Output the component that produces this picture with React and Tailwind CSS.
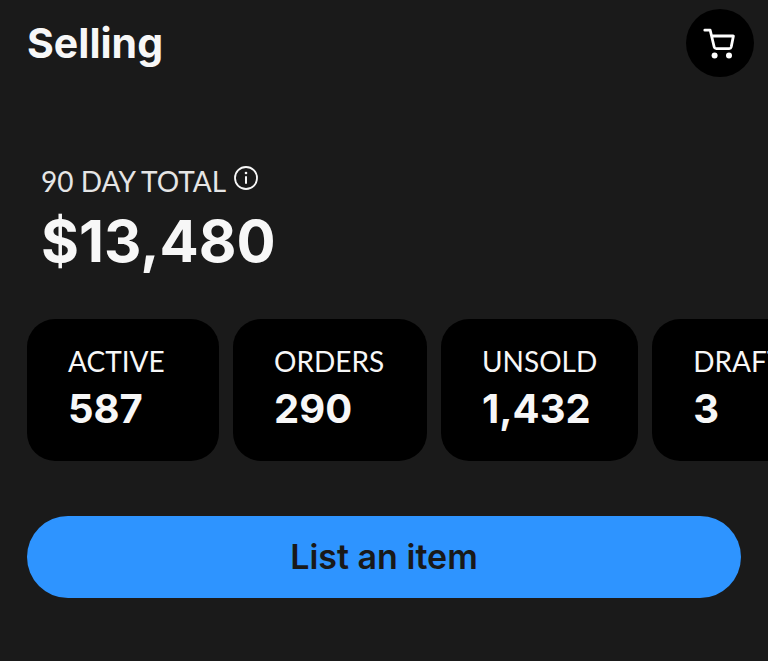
import React from 'react';

const STATS = [
  { id: 'active', label: 'ACTIVE', value: '587', width: 'min-w-[192px]' },
  { id: 'orders', label: 'ORDERS', value: '290', width: 'min-w-[194px]' },
  { id: 'unsold', label: 'UNSOLD', value: '1,432', width: 'min-w-[196px]' },
  { id: 'drafts', label: 'DRAFTS', value: '3', width: 'min-w-[192px]' }
];

const CartIcon = () => (
  <svg viewBox="0 0 34 32" className="w-[34px] h-8" fill="none" aria-hidden="true">
    <path
      d="M1.8 3.2H7.2L11.2 20Q11.6 21.6 13.2 21.6H26.2Q27.8 21.6 28.2 20L30.4 9H8.8"
      stroke="currentColor"
      strokeWidth="2.8"
      strokeLinecap="round"
      strokeLinejoin="round"
    />
    <circle cx="11.6" cy="28.5" r="3" fill="currentColor" />
    <circle cx="26" cy="28.5" r="3" fill="currentColor" />
  </svg>
);

const InfoIcon = () => (
  <svg viewBox="0 0 24 24" className="w-6 h-6" fill="none" aria-hidden="true">
    <circle cx="12" cy="12" r="11" stroke="currentColor" strokeWidth="1.8" />
    <circle cx="12" cy="7" r="1.3" fill="currentColor" />
    <path d="M12 11V17" stroke="currentColor" strokeWidth="2" strokeLinecap="round" />
  </svg>
);

const StatCard = ({ label, value, width }) => (
  <button
    type="button"
    className={`shrink-0 rounded-[28px] bg-black pt-6 pb-[26px] px-[41px] text-left ${width}`}
  >
    <span className="block font-['Lato',sans-serif] text-[28px] leading-9">{label}</span>
    <span className="block mt-1 text-[40px] leading-[52px] font-bold">{value}</span>
  </button>
);

const App = () => {
  return (
    <main className="min-h-screen overflow-hidden bg-[#1a1a1a] font-['Inter',sans-serif] text-[#f7f7f7]">
      {/* Header */}
      <header className="flex items-center justify-between pt-[9px] pl-[27px] pr-3.5">
        <h1 className="text-[41px] leading-[50px] font-bold">Selling</h1>
        <button
          type="button"
          aria-label="Cart"
          className="flex h-[68px] w-[68px] items-center justify-center rounded-full bg-black text-white"
        >
          <CartIcon />
        </button>
      </header>

      {/* 90 day total */}
      <section className="mt-[86px] px-[41px]">
        <div className="flex items-start gap-2">
          <h2 className="font-['Lato',sans-serif] text-[28px] leading-9 text-[#e5e5e5]">90 DAY TOTAL</h2>
          <button type="button" aria-label="About the 90 day total" className="mt-[3px]">
            <InfoIcon />
          </button>
        </div>
        <p className="mt-1 text-[58px] leading-[76px] font-bold">$13,480</p>
      </section>

      {/* Listing counts */}
      <section className="mt-10 flex gap-3.5 overflow-hidden pl-[27px]">
        {STATS.map(stat => (
          <StatCard key={stat.id} label={stat.label} value={stat.value} width={stat.width} />
        ))}
      </section>

      <div className="mt-[55px] px-[27px]">
        <button
          type="button"
          className="h-[82px] w-full rounded-full bg-[#2e94ff] text-[34px] leading-10 font-semibold text-[#191919]"
        >
          List an item
        </button>
      </div>
    </main>
  );
};

export default App;
